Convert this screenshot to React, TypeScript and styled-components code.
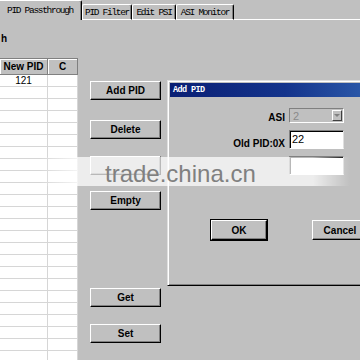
import React from 'react'
import styled, { createGlobalStyle } from 'styled-components'

const GlobalStyle = createGlobalStyle`
  html, body {
    margin: 0;
    padding: 0;
    background: #c0c0c0;
  }
  body {
    width: 360px;
    height: 360px;
    overflow: hidden;
    font-family: 'Liberation Sans', Arial, sans-serif;
  }
`

const Screen = styled.div`
  position: relative;
  width: 360px;
  height: 360px;
  overflow: hidden;
  background: #c0c0c0;
`

const TabStrip = styled.div`
  display: flex;
  align-items: flex-end;
  height: 20px;
`

const Tab = styled.div<{ $active?: boolean; $w: number }>`
  box-sizing: border-box;
  width: ${(p) => p.$w}px;
  height: ${(p) => (p.$active ? 20 : 16)}px;
  margin-left: ${(p) => (p.$active ? -2 : 0)}px;
  background: #c0c0c0;
  border-top: 1px solid #fff;
  border-left: 1px solid #fff;
  border-right: 1px solid #000;
  border-bottom: ${(p) => (p.$active ? 'none' : '1px solid #fff')};
  border-radius: 2px 2px 0 0;
  box-shadow: inset -1px 0 #808080;
  display: flex;
  justify-content: center;
  align-items: ${(p) => (p.$active ? 'flex-start' : 'center')};
  padding-top: ${(p) => (p.$active ? 4 : 0)}px;
  font-family: 'Liberation Mono', 'Courier New', monospace;
  font-size: 9.5px;
  letter-spacing: -1.3px;
  color: #000;
  white-space: nowrap;
`

const TabFiller = styled.div`
  flex: 1;
  height: 1px;
  background: #fff;
`

const Body = styled.div`
  display: flex;
  height: 340px;
`

const LeftPane = styled.div`
  width: 78px;
  display: flex;
  flex-direction: column;
`

const Caption = styled.div`
  margin-top: 13px;
  height: 12px;
  padding-left: 1px;
  font-size: 10px;
  font-weight: bold;
  line-height: 12px;
  color: #000;
`

const Grid = styled.div`
  margin-top: 13px;
  flex: 1;
  background: #fff;
  border-top: 1px solid #808080;
  overflow: hidden;
`

const GridRow = styled.div<{ $header?: boolean }>`
  display: grid;
  grid-template-columns: 48px 30px;
  height: ${(p) => (p.$header ? 16 : 12)}px;
`

const HeadCell = styled.div`
  box-sizing: border-box;
  background: #c0c0c0;
  border-right: 1px solid #808080;
  border-bottom: 1px solid #808080;
  box-shadow: inset 1px 1px #fff;
  font-size: 10px;
  font-weight: bold;
  line-height: 15px;
  text-align: center;
  color: #000;
`

const Cell = styled.div`
  box-sizing: border-box;
  border-right: 1px solid #d6d6d6;
  border-bottom: 1px solid #d6d6d6;
  font-size: 10px;
  line-height: 11px;
  text-align: center;
  color: #000;
`

const ButtonColumn = styled.div`
  margin-left: 12px;
  width: 71px;
  display: flex;
  flex-direction: column;
`

const WinButton = styled.button<{ $top?: number; $w?: number; $h?: number; $default?: boolean }>`
  box-sizing: border-box;
  margin: ${(p) => p.$top ?? 0}px 0 0 0;
  width: ${(p) => p.$w ?? 71}px;
  height: ${(p) => p.$h ?? 19}px;
  padding: 0;
  background: #c0c0c0;
  border-top: 1px solid #fff;
  border-left: 1px solid #fff;
  border-right: 1px solid #000;
  border-bottom: 1px solid #000;
  box-shadow: inset -1px -1px #808080;
  outline: ${(p) => (p.$default ? '1px solid #000' : 'none')};
  font-family: 'Liberation Sans', Arial, sans-serif;
  font-size: 10px;
  font-weight: bold;
  color: #000;
  text-align: center;
`

const Dialog = styled.div`
  position: absolute;
  left: 167px;
  top: 80px;
  width: 215px;
  height: 206px;
  box-sizing: border-box;
  padding: 2px;
  background: #c0c0c0;
  border-top: 1px solid #dfdfdf;
  border-left: 1px solid #dfdfdf;
  border-bottom: 1px solid #000;
  box-shadow: inset 1px 1px #fff, inset 0 -1px #808080;
`

const TitleBar = styled.div`
  height: 14px;
  padding-left: 3px;
  background: linear-gradient(to right, #0a1f74 0%, #14348c 55%, #2f5fae 100%);
  color: #fff;
  font-family: 'Liberation Mono', 'Courier New', monospace;
  font-size: 8.5px;
  font-weight: bold;
  letter-spacing: -0.6px;
  line-height: 14px;
`

const Form = styled.div`
  margin-top: 11px;
  display: grid;
  grid-template-columns: 115px 55px;
  column-gap: 4px;
  row-gap: 7px;
`

const FieldLabel = styled.div`
  align-self: end;
  text-align: right;
  font-size: 10px;
  font-weight: bold;
  line-height: 10px;
  color: #000;
`

const Combo = styled.div`
  box-sizing: border-box;
  height: 15px;
  display: flex;
  justify-content: space-between;
  align-items: center;
  padding: 0 1px 0 3px;
  background: #c0c0c0;
  border-top: 1px solid #808080;
  border-left: 1px solid #808080;
  border-bottom: 1px solid #fff;
  border-right: 1px solid #fff;
  font-size: 11px;
  color: #8a8a8a;
`

const ComboArrow = styled.div`
  box-sizing: border-box;
  width: 10px;
  height: 11px;
  display: flex;
  justify-content: center;
  align-items: center;
  border-top: 1px solid #fff;
  border-left: 1px solid #fff;
  border-right: 1px solid #404040;
  border-bottom: 1px solid #404040;
  &::after {
    content: '';
    border-left: 3px solid transparent;
    border-right: 3px solid transparent;
    border-top: 3px solid #808080;
  }
`

const TextInput = styled.div`
  box-sizing: border-box;
  height: 19px;
  padding: 2px 0 0 2px;
  background: #fff;
  border-top: 1px solid #808080;
  border-left: 1px solid #808080;
  border-bottom: 1px solid #fff;
  border-right: 1px solid #dfdfdf;
  box-shadow: inset 1px 1px #000;
  font-size: 11px;
  line-height: 12px;
  color: #000;
`

const DialogButtons = styled.div`
  display: flex;
  gap: 45px;
  margin-top: 45px;
  padding-left: 41px;
`

const Watermark = styled.div`
  position: absolute;
  left: 40px;
  top: 157px;
  width: 310px;
  height: 29px;
  box-sizing: border-box;
  padding: 5px 0 0 65px;
  background: linear-gradient(
    to right,
    rgba(255, 255, 255, 0) 0%,
    rgba(255, 255, 255, 0.72) 12%,
    rgba(255, 255, 255, 0.72) 88%,
    rgba(255, 255, 255, 0) 100%
  );
  font-family: 'Liberation Sans', Arial, sans-serif;
  font-size: 24px;
  line-height: 24px;
  color: #808080;
  white-space: nowrap;
`

const tabs = [
  { label: 'PID Passthrough', w: 84, active: true },
  { label: 'PID Filter', w: 50 },
  { label: 'Edit PSI', w: 44 },
  { label: 'ASI Monitor', w: 58 },
]

const rows = Array.from({ length: 24 }, (_, i) => (i === 0 ? '121' : ''))

const sideButtons = [
  { label: 'Add PID', top: 61 },
  { label: 'Delete', top: 20 },
  { label: '', top: 17 },
  { label: 'Empty', top: 16 },
  { label: 'Get', top: 78 },
  { label: 'Set', top: 17 },
]

const App = () => {
  return (
    <Screen>
      <GlobalStyle />
      <TabStrip>
        {tabs.map((t) => (
          <Tab key={t.label} $w={t.w} $active={t.active}>
            {t.label}
          </Tab>
        ))}
        <TabFiller />
      </TabStrip>

      <Body>
        <LeftPane>
          <Caption>h</Caption>
          <Grid>
            <GridRow $header>
              <HeadCell>New PID</HeadCell>
              <HeadCell>C</HeadCell>
            </GridRow>
            {rows.map((v, i) => (
              <GridRow key={i}>
                <Cell>{v}</Cell>
                <Cell />
              </GridRow>
            ))}
          </Grid>
        </LeftPane>

        <ButtonColumn>
          {sideButtons.map((b, i) => (
            <WinButton key={i} $top={b.top}>
              {b.label}
            </WinButton>
          ))}
        </ButtonColumn>
      </Body>

      <Dialog>
        <TitleBar>Add PID</TitleBar>
        <Form>
          <FieldLabel>ASI</FieldLabel>
          <Combo>
            2
            <ComboArrow />
          </Combo>
          <FieldLabel>Old PID:0X</FieldLabel>
          <TextInput>22</TextInput>
          <FieldLabel />
          <TextInput />
        </Form>
        <DialogButtons>
          <WinButton $w={56} $h={20} $default>
            OK
          </WinButton>
          <WinButton $w={56} $h={20}>
            Cancel
          </WinButton>
        </DialogButtons>
      </Dialog>

      <Watermark>trade.china.cn</Watermark>
    </Screen>
  )
}

export default App
